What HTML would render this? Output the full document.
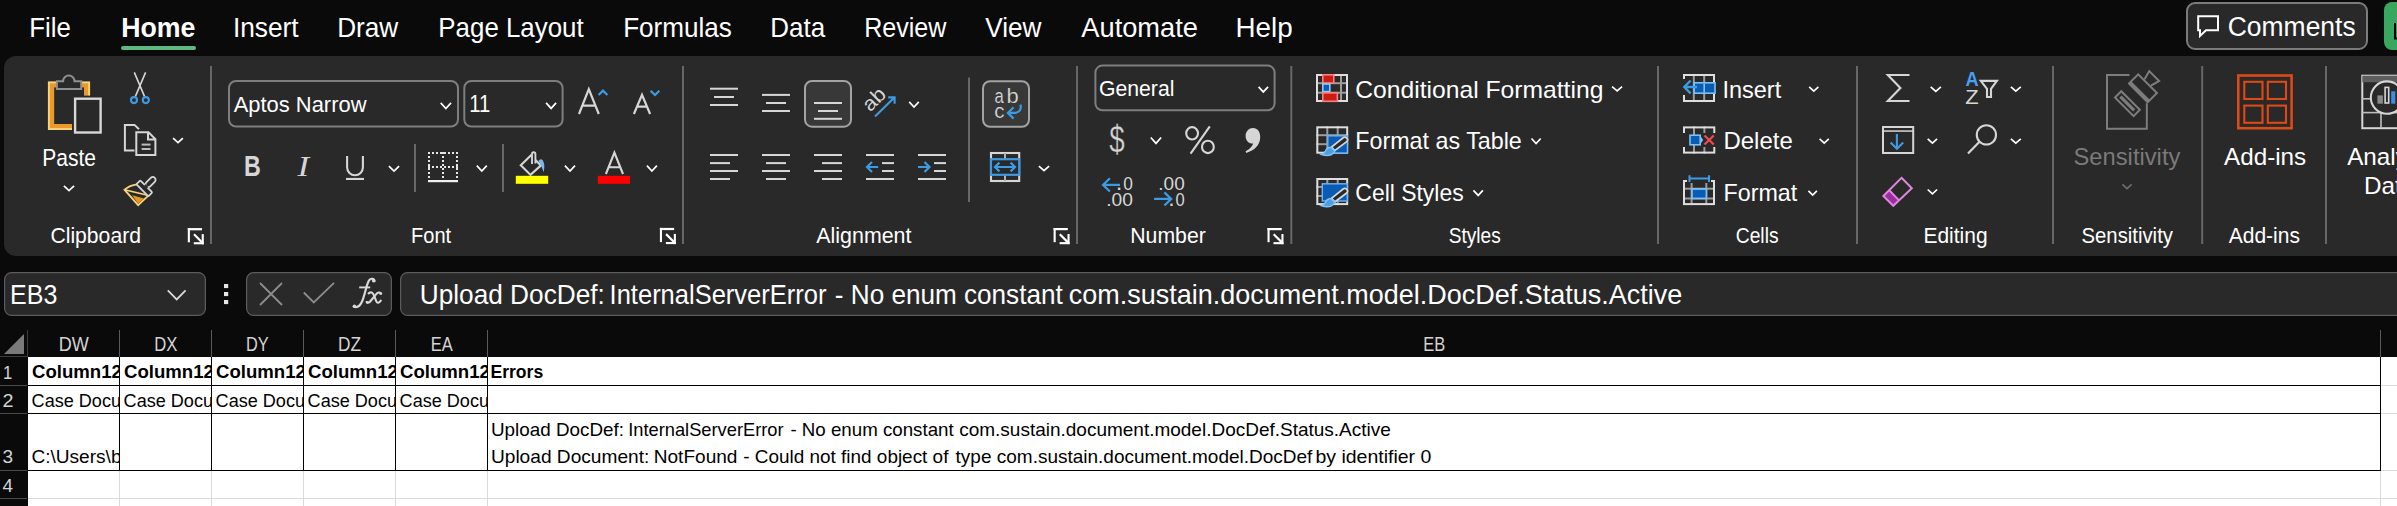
<!DOCTYPE html>
<html><head><meta charset="utf-8"><title>Excel</title>
<style>
html,body{margin:0;padding:0;background:#0a0a0a;width:2397px;height:506px;overflow:hidden}
svg{position:absolute;left:0;top:0;display:block}
text{font-family:"Liberation Sans",sans-serif;white-space:pre}
</style></head><body>
<svg width="2397" height="506" viewBox="0 0 2397 506">
<defs><clipPath id="c28"><rect x="28" y="357" width="91" height="150"/></clipPath><clipPath id="c120"><rect x="120" y="357" width="91" height="150"/></clipPath><clipPath id="c212"><rect x="212" y="357" width="91" height="150"/></clipPath><clipPath id="c304"><rect x="304" y="357" width="91" height="150"/></clipPath><clipPath id="c396"><rect x="396" y="357" width="91" height="150"/></clipPath></defs>
<rect x="4" y="56" width="2460" height="200" rx="12" fill="#292929"/>
<rect x="121" y="46" width="75" height="4" rx="2" fill="#5fb883"/>
<rect x="2187.0" y="3.0" width="180.0" height="46.0" rx="8" fill="#292929" stroke="#7b7b7b" stroke-width="2"/>
<rect x="2384" y="2" width="60" height="48" rx="8" fill="#3aa75f"/>
<rect x="2394" y="23" width="2" height="16" fill="#000"/><rect x="2394" y="37.5" width="3" height="2" fill="#000"/>
<rect x="210.0" y="66" width="2" height="178" fill="#676767"/>
<rect x="682.0" y="66" width="2" height="178" fill="#676767"/>
<rect x="1076.0" y="66" width="2" height="178" fill="#676767"/>
<rect x="1290.3" y="66" width="2" height="178" fill="#676767"/>
<rect x="1657.0" y="66" width="2" height="178" fill="#676767"/>
<rect x="1856.0" y="66" width="2" height="178" fill="#676767"/>
<rect x="2052.0" y="66" width="2" height="178" fill="#676767"/>
<rect x="2201.2" y="66" width="2" height="178" fill="#676767"/>
<rect x="2325.0" y="66" width="2" height="178" fill="#676767"/>
<rect x="414.0" y="144" width="2" height="48" fill="#676767"/>
<rect x="502.0" y="144" width="2" height="48" fill="#676767"/>
<rect x="968.0" y="77.5" width="2" height="124.5" fill="#676767"/>
<rect x="229.0" y="81.0" width="229.0" height="45.6" rx="7" fill="#292929" stroke="#7e7e7e" stroke-width="2"/>
<rect x="464.3" y="81.0" width="98.3" height="45.6" rx="7" fill="#292929" stroke="#7e7e7e" stroke-width="2"/>
<rect x="1095.4" y="65.6" width="179.2" height="44.7" rx="7" fill="#292929" stroke="#7e7e7e" stroke-width="2"/>
<rect x="805.0" y="81.0" width="46.0" height="45.7" rx="7" fill="#383838" stroke="#a3a3a3" stroke-width="2"/>
<rect x="983.0" y="81.2" width="46.0" height="45.6" rx="7" fill="#383838" stroke="#a3a3a3" stroke-width="2"/>
<g fill="#ffffff"><rect x="187.8" y="228.1" width="14.2" height="2.2"/><rect x="187.8" y="228.1" width="2.1" height="14.2"/><rect x="201.7" y="234.1" width="2.1" height="10.2"/><rect x="193.8" y="242.2" width="10" height="2.1"/></g><line x1="194.0" y1="234.3" x2="202.4" y2="242.7" stroke="#ffffff" stroke-width="2.2"/>
<g fill="#ffffff"><rect x="659.9" y="227.9" width="14.2" height="2.2"/><rect x="659.9" y="227.9" width="2.1" height="14.2"/><rect x="673.8" y="233.9" width="2.1" height="10.2"/><rect x="665.9" y="242.0" width="10" height="2.1"/></g><line x1="666.1" y1="234.1" x2="674.5" y2="242.5" stroke="#ffffff" stroke-width="2.2"/>
<g fill="#ffffff"><rect x="1053.6" y="228" width="14.2" height="2.2"/><rect x="1053.6" y="228" width="2.1" height="14.2"/><rect x="1067.5" y="234.0" width="2.1" height="10.2"/><rect x="1059.6" y="242.1" width="10" height="2.1"/></g><line x1="1059.8" y1="234.2" x2="1068.2" y2="242.6" stroke="#ffffff" stroke-width="2.2"/>
<g fill="#ffffff"><rect x="1267.5" y="228" width="14.2" height="2.2"/><rect x="1267.5" y="228" width="2.1" height="14.2"/><rect x="1281.4" y="234.0" width="2.1" height="10.2"/><rect x="1273.5" y="242.1" width="10" height="2.1"/></g><line x1="1273.7" y1="234.2" x2="1282.1" y2="242.6" stroke="#ffffff" stroke-width="2.2"/>
<polyline points="63.9,185.9 69.0,190.6 74.1,185.9" fill="none" stroke="#ffffff" stroke-width="1.7"/>
<polyline points="173.1,138.1 178.0,142.7 182.9,138.1" fill="none" stroke="#ffffff" stroke-width="1.7"/>
<polyline points="388.9,166.1 394.0,171.1 399.1,166.1" fill="none" stroke="#ffffff" stroke-width="1.7"/>
<polyline points="476.8,165.6 481.8,171.1 486.8,165.6" fill="none" stroke="#ffffff" stroke-width="1.7"/>
<polyline points="564.9,165.6 570.0,171.1 575.0,165.6" fill="none" stroke="#ffffff" stroke-width="1.7"/>
<polyline points="646.9,165.6 651.9,171.1 656.9,165.6" fill="none" stroke="#ffffff" stroke-width="1.7"/>
<polyline points="440.7,102.9 445.9,108.5 451.0,102.9" fill="none" stroke="#ffffff" stroke-width="1.7"/>
<polyline points="546.1,102.9 551.1,108.4 556.1,102.9" fill="none" stroke="#ffffff" stroke-width="1.7"/>
<polyline points="909.2,101.9 914.0,107.1 918.8,101.9" fill="none" stroke="#ffffff" stroke-width="1.7"/>
<polyline points="1038.9,166.1 1044.0,170.6 1049.1,166.1" fill="none" stroke="#ffffff" stroke-width="1.7"/>
<polyline points="1258.6,86.9 1263.3,91.9 1268.1,86.9" fill="none" stroke="#ffffff" stroke-width="1.7"/>
<polyline points="1150.8,137.5 1156.0,143.4 1161.1,137.5" fill="none" stroke="#ffffff" stroke-width="1.7"/>
<polyline points="1612.1,86.6 1617.1,90.8 1622.1,86.6" fill="none" stroke="#ffffff" stroke-width="1.7"/>
<polyline points="1531.5,138.5 1536.1,143.5 1540.7,138.5" fill="none" stroke="#ffffff" stroke-width="1.7"/>
<polyline points="1473.4,190.4 1478.2,195.4 1482.9,190.4" fill="none" stroke="#ffffff" stroke-width="1.7"/>
<polyline points="1809.2,86.9 1813.8,91.1 1818.4,86.9" fill="none" stroke="#ffffff" stroke-width="1.7"/>
<polyline points="1819.6,138.9 1824.2,143.1 1828.8,138.9" fill="none" stroke="#ffffff" stroke-width="1.7"/>
<polyline points="1808.4,190.9 1812.7,195.1 1816.9,190.9" fill="none" stroke="#ffffff" stroke-width="1.7"/>
<polyline points="1930.7,86.9 1935.8,91.3 1940.9,86.9" fill="none" stroke="#ffffff" stroke-width="1.7"/>
<polyline points="2010.9,86.9 2015.8,91.1 2020.8,86.9" fill="none" stroke="#ffffff" stroke-width="1.7"/>
<polyline points="1927.7,138.9 1932.4,143.1 1937.1,138.9" fill="none" stroke="#ffffff" stroke-width="1.7"/>
<polyline points="2010.9,138.9 2015.8,143.1 2020.8,138.9" fill="none" stroke="#ffffff" stroke-width="1.7"/>
<polyline points="1927.7,189.5 1932.4,193.9 1937.1,189.5" fill="none" stroke="#ffffff" stroke-width="1.7"/>
<polyline points="2122.4,184.4 2127.0,188.6 2131.6,184.4" fill="none" stroke="#6e6e6e" stroke-width="1.7"/>
<rect x="4.6" y="272.6" width="200.8" height="42.8" rx="7" fill="#292929" stroke="#5c5c5c" stroke-width="1.2"/>
<rect x="246.6" y="272.6" width="144.8" height="42.8" rx="7" fill="#292929" stroke="#5c5c5c" stroke-width="1.2"/>
<rect x="400.6" y="272.6" width="2058.8" height="42.8" rx="7" fill="#292929" stroke="#5c5c5c" stroke-width="1.2"/>
<rect x="224" y="284" width="4.2" height="4.1" fill="#e6e6e6"/>
<rect x="224" y="292" width="4.2" height="4.1" fill="#e6e6e6"/>
<rect x="224" y="300" width="4.2" height="4.1" fill="#e6e6e6"/>
<polyline points="167.8,290.4 176.7,299.5 185.6,290.4" fill="none" stroke="#d8d8d8" stroke-width="1.8"/>
<path d="M260,283 L282,305 M282,283 L260,305" stroke="#8c8c8c" stroke-width="1.8" fill="none"/>
<polyline points="303.8,292.5 313.8,302.5 334,282.8" fill="none" stroke="#8c8c8c" stroke-width="1.8"/>
<path d="M374.6,281.2 C374.2,278.4 370.8,277.8 368.9,280.6 C366.6,284 364.6,296 361.9,301.8 C360,306 357,308 353.8,306.6" fill="none" stroke="#d8d8d8" stroke-width="2.2" stroke-linecap="round"/>
<path d="M359.2,287.4 H370.2" fill="none" stroke="#d8d8d8" stroke-width="1.9" />
<path d="M368.6,293.4 C371.4,291.2 373,292.6 374.2,296 L376.2,301.2 C377.2,303.6 379,303.2 380.8,300.6" fill="none" stroke="#d8d8d8" stroke-width="2.1" stroke-linecap="round"/>
<path d="M381.2,293.6 C379.8,291.6 377.6,292.4 375.8,294.6 L370.6,301 C369.4,302.6 367.8,303.4 366.6,302" fill="none" stroke="#d8d8d8" stroke-width="2.1" stroke-linecap="round"/>
<circle cx="373.6" cy="280.8" r="1.7" fill="#d8d8d8"/><circle cx="354.4" cy="306.2" r="1.7" fill="#d8d8d8"/><circle cx="367.4" cy="302.4" r="1.3" fill="#d8d8d8"/><circle cx="380.4" cy="293.4" r="1.3" fill="#d8d8d8"/>
<polygon points="24,334 24,354 4,354" fill="#7a7a7a"/>
<rect x="27" y="330" width="1" height="27" fill="#3c3c3c"/>
<rect x="0" y="356" width="27" height="1" fill="#3c3c3c"/>
<rect x="119" y="330" width="1" height="27" fill="#5a5a5a"/>
<rect x="211" y="330" width="1" height="27" fill="#5a5a5a"/>
<rect x="303" y="330" width="1" height="27" fill="#5a5a5a"/>
<rect x="395" y="330" width="1" height="27" fill="#5a5a5a"/>
<rect x="487" y="330" width="1" height="27" fill="#5a5a5a"/>
<rect x="2380" y="330" width="1" height="27" fill="#5a5a5a"/>
<rect x="28" y="357" width="2369" height="149" fill="#ffffff"/>
<rect x="0" y="385" width="27" height="1" fill="#4a4a4a"/>
<rect x="0" y="413" width="27" height="1" fill="#4a4a4a"/>
<rect x="0" y="470" width="27" height="1" fill="#4a4a4a"/>
<rect x="0" y="498" width="27" height="1" fill="#4a4a4a"/>
<rect x="28" y="498" width="2369" height="1" fill="#dadada"/>
<rect x="119" y="470" width="1" height="36" fill="#dadada"/>
<rect x="211" y="470" width="1" height="36" fill="#dadada"/>
<rect x="303" y="470" width="1" height="36" fill="#dadada"/>
<rect x="395" y="470" width="1" height="36" fill="#dadada"/>
<rect x="487" y="470" width="1" height="36" fill="#dadada"/>
<rect x="2380" y="470" width="1" height="36" fill="#dadada"/>
<rect x="2381" y="385" width="16" height="1" fill="#dadada"/>
<rect x="2381" y="413" width="16" height="1" fill="#dadada"/>
<rect x="2381" y="470" width="16" height="1" fill="#dadada"/>
<rect x="119" y="357" width="1" height="114" fill="#000"/>
<rect x="211" y="357" width="1" height="114" fill="#000"/>
<rect x="303" y="357" width="1" height="114" fill="#000"/>
<rect x="395" y="357" width="1" height="114" fill="#000"/>
<rect x="487" y="357" width="1" height="114" fill="#000"/>
<rect x="2380" y="357" width="1" height="114" fill="#000"/>
<rect x="28" y="385" width="2353" height="1" fill="#000"/>
<rect x="28" y="413" width="2353" height="1" fill="#000"/>
<rect x="28" y="470" width="2353" height="1" fill="#000"/>
<rect x="47.90" y="81.40" width="42.20" height="48.60" fill="#f8d47e"/>
<rect x="49.80" y="83.30" width="38.40" height="44.80" fill="#e99a2a"/>
<rect x="54.20" y="87.40" width="29.80" height="36.60" fill="#292929"/>
<rect x="72.00" y="95.60" width="32.00" height="40.40" fill="#292929"/>
<path d="M56.9,88.9 V81.2 H63.1 A5.7,5.7 0 0 1 74.5,81.2 H81.2 V88.9 Z" fill="#292929" stroke="#8f8f8f" stroke-width="2" />
<rect x="75.1" y="98.7" width="25.5" height="33.8" fill="none" stroke="#d8d8d8" stroke-width="2.4"/>
<path d="M134.3,72.4 L144.6,96.6 M145.6,72.4 L135.3,96.6" fill="none" stroke="#d6d6d6" stroke-width="1.6" />
<circle cx="134" cy="100.1" r="3.0" fill="none" stroke="#3d9be3" stroke-width="2.1"/>
<circle cx="145.8" cy="100.1" r="3.0" fill="none" stroke="#3d9be3" stroke-width="2.1"/>
<path d="M134.5,150.6 H124.9 V124.9 H134.5 L139,129.3" fill="none" stroke="#d6d6d6" stroke-width="2" />
<path d="M136.3,155 V132.2 H148.5 L155.4,139.1 V155 Z M148,132.2 V139.6 H155.4" fill="#292929" stroke="#d6d6d6" stroke-width="2" />
<rect x="141.60" y="143.60" width="8.90" height="2.00" fill="#bdbdbd"/>
<rect x="141.60" y="148.00" width="8.90" height="2.00" fill="#bdbdbd"/>
<g transform="translate(144.3,188.3) rotate(45)"><path d="M-8,2.3 Q-12.5,8 -13,15 L7.6,16.3 L8,2.3" fill="none" stroke="#f6d27c" stroke-width="1.8" /><path d="M-13,15 L8.2,2" fill="none" stroke="#f6d27c" stroke-width="1.6" /><polygon points="-3.6,13.6 6.9,7.4 6.5,15.2" fill="#e8961f"/><rect x="-8.5" y="-2.8" width="17" height="5.6" rx="1" fill="#292929" stroke="#d6d6d6" stroke-width="1.8"/><rect x="-2.8" y="-14.8" width="5.6" height="12" rx="2.8" fill="#292929" stroke="#d6d6d6" stroke-width="1.8"/><rect x="-1.90" y="-3.70" width="3.80" height="2.10" fill="#292929"/></g>
<path d="M579,114 L588.8,89.2 L598.8,114 M582.6,105.6 H595.2" fill="none" stroke="#d6d6d6" stroke-width="2.2" stroke-linejoin="miter"/>
<path d="M598.6,95 L603,90.6 L607.4,95" fill="none" stroke="#3d9be3" stroke-width="2.2" />
<path d="M633.9,114 L642,94.8 L650.1,114 M636.8,106.6 H647.2" fill="none" stroke="#d6d6d6" stroke-width="2.2" />
<path d="M650.6,90.8 L655,95 L659.4,90.8" fill="none" stroke="#3d9be3" stroke-width="2.2" />
<path d="M347.1,156 V167.3 A7.9,7.9 0 0 0 362.9,167.3 V156" fill="none" stroke="#d6d6d6" stroke-width="2.1" />
<rect x="346.00" y="177.90" width="18.00" height="2.10" fill="#d6d6d6"/>
<path d="M428.0,152.0h2v2h-2zM428.0,166.0h2v2h-2zM432.0,152.0h2v2h-2zM432.0,166.0h2v2h-2zM436.0,152.0h2v2h-2zM436.0,166.0h2v2h-2zM440.0,152.0h2v2h-2zM440.0,166.0h2v2h-2zM444.0,152.0h2v2h-2zM444.0,166.0h2v2h-2zM448.0,152.0h2v2h-2zM448.0,166.0h2v2h-2zM452.0,152.0h2v2h-2zM452.0,166.0h2v2h-2zM456.0,152.0h2v2h-2zM456.0,166.0h2v2h-2zM428.0,152.0h2v2h-2zM442.0,152.0h2v2h-2zM456.0,152.0h2v2h-2zM428.0,156.0h2v2h-2zM442.0,156.0h2v2h-2zM456.0,156.0h2v2h-2zM428.0,160.0h2v2h-2zM442.0,160.0h2v2h-2zM456.0,160.0h2v2h-2zM428.0,164.0h2v2h-2zM442.0,164.0h2v2h-2zM456.0,164.0h2v2h-2zM428.0,168.0h2v2h-2zM442.0,168.0h2v2h-2zM456.0,168.0h2v2h-2zM428.0,172.0h2v2h-2zM442.0,172.0h2v2h-2zM456.0,172.0h2v2h-2zM428.0,176.0h2v2h-2zM442.0,176.0h2v2h-2zM456.0,176.0h2v2h-2z" fill="#e6e6e6"/>
<rect x="428.00" y="180.00" width="30.00" height="2.20" fill="#f0f0f0"/>
<path d="M530.8,155.4 L541,165.4 L530.5,174.9 L520.8,165.3 Z" fill="none" stroke="#d6d6d6" stroke-width="2.1" />
<rect x="531.2" y="152.2" width="4" height="12" rx="2" fill="#292929"/>
<path d="M532,164 V154 A1.7,1.7 0 0 1 535.4,154 V163.5" fill="none" stroke="#d6d6d6" stroke-width="1.9" />
<path d="M538.4,160.8 Q540.5,158 542.5,160 Q545.2,163 543.8,172.3 Q541.5,166 538.4,160.8 Z" fill="#7cb9ea" stroke="none" stroke-width="0" />
<rect x="515.80" y="175.80" width="32.40" height="8.00" fill="#ffff00"/>
<path d="M605.9,174 L614.4,152.6 L623,174 M608.7,167.2 H620.1" fill="none" stroke="#d6d6d6" stroke-width="2.1" />
<rect x="597.80" y="175.80" width="32.20" height="8.00" fill="#ff0000"/>
<rect x="710" y="87.7" width="28" height="2" fill="#d6d6d6"/><rect x="710" y="104.0" width="28" height="2" fill="#d6d6d6"/><rect x="714" y="96.0" width="20" height="2" fill="#d6d6d6"/>
<rect x="762" y="93.9" width="28" height="2" fill="#d6d6d6"/><rect x="762" y="110.0" width="28" height="2" fill="#d6d6d6"/><rect x="766" y="102.0" width="20" height="2" fill="#d6d6d6"/>
<rect x="814" y="102.0" width="28" height="2" fill="#d6d6d6"/><rect x="814" y="117.8" width="28" height="2" fill="#d6d6d6"/><rect x="818" y="110.0" width="20" height="2" fill="#d6d6d6"/>
<rect x="710" y="154.0" width="28" height="2" fill="#d6d6d6"/><rect x="710" y="170.0" width="28" height="2" fill="#d6d6d6"/><rect x="710" y="162.1" width="20" height="2" fill="#d6d6d6"/><rect x="710" y="178.0" width="20" height="2" fill="#d6d6d6"/>
<rect x="762" y="154.0" width="28" height="2" fill="#d6d6d6"/><rect x="762" y="170.0" width="28" height="2" fill="#d6d6d6"/><rect x="766" y="162.1" width="20" height="2" fill="#d6d6d6"/><rect x="766" y="178.0" width="20" height="2" fill="#d6d6d6"/>
<rect x="814" y="154.0" width="28" height="2" fill="#d6d6d6"/><rect x="814" y="170.0" width="28" height="2" fill="#d6d6d6"/><rect x="822" y="162.1" width="20" height="2" fill="#d6d6d6"/><rect x="822" y="178.0" width="20" height="2" fill="#d6d6d6"/>
<rect x="866" y="154.0" width="28" height="2" fill="#d6d6d6"/><rect x="866" y="178.0" width="28" height="2" fill="#d6d6d6"/><rect x="882" y="162.1" width="12" height="2" fill="#d6d6d6"/><rect x="882" y="170.0" width="12" height="2" fill="#d6d6d6"/>
<rect x="918" y="154.0" width="28" height="2" fill="#d6d6d6"/><rect x="918" y="178.0" width="28" height="2" fill="#d6d6d6"/><rect x="934" y="162.1" width="12" height="2" fill="#d6d6d6"/><rect x="934" y="170.0" width="12" height="2" fill="#d6d6d6"/>
<path d="M867,167 H878.2 M872,162 L867,167 L872,172" fill="none" stroke="#3d9be3" stroke-width="2.2" />
<path d="M918,167 H929.5 M924.5,162 L929.5,167 L924.5,172" fill="none" stroke="#3d9be3" stroke-width="2.2" />
<path d="M875,116.6 L894.3,97.4 M888.2,97.4 H894.6 V103.8" fill="none" stroke="#3d9be3" stroke-width="2.1" />
<path d="M1020.4,104.6 C1021.8,109.5 1019.5,112.9 1013,112.9 H1007.8 M1013.6,107.2 L1007.9,112.9 L1013.6,118.6" fill="none" stroke="#3d9be3" stroke-width="2.2" />
<rect x="991" y="153" width="28.2" height="28" fill="none" stroke="#d6d6d6" stroke-width="2.1"/>
<rect x="1004.00" y="153.00" width="2.00" height="28.00" fill="#b0b0b0"/>
<rect x="991" y="159.2" width="28.2" height="15.6" fill="#292929" stroke="#3d9be3" stroke-width="2.2"/>
<path d="M994.8,167 H1015.2 M999.4,162.6 L995,167 L999.4,171.4 M1010.6,162.6 L1015,167 L1010.6,171.4" fill="none" stroke="#3d9be3" stroke-width="2.2" />
<ellipse cx="1192.1" cy="133.3" rx="5.9" ry="6.2" fill="none" stroke="#d6d6d6" stroke-width="2.1"/>
<ellipse cx="1207.9" cy="146.9" rx="5.9" ry="6.2" fill="none" stroke="#d6d6d6" stroke-width="2.1"/>
<path d="M1209.8,126.4 L1190.6,153.6" fill="none" stroke="#d6d6d6" stroke-width="2.1" />
<path d="M1253,128 C1257.5,128 1260.2,131.5 1260.2,137 C1260.2,145 1254.5,150.5 1246.2,152.9 L1245.6,151.3 C1250,149 1252.3,146.3 1253.2,143.6 C1248.6,143.8 1245.6,140.6 1245.6,136 C1245.6,131.5 1249,128 1253,128 Z" fill="#d6d6d6" stroke="none" stroke-width="0" />
<path d="M1102.8,184.9 H1120 M1109.9,178.3 L1103,184.9 L1109.9,191.5" fill="none" stroke="#3d9be3" stroke-width="2.2" />
<path d="M1154.1,198.9 H1171.2 M1164.4,192.4 L1171.2,198.9 L1164.4,205.5" fill="none" stroke="#3d9be3" stroke-width="2.2" />
<rect x="1327.00" y="74.00" width="2.00" height="28.00" fill="#9c9c9c"/><rect x="1340.00" y="74.00" width="2.00" height="28.00" fill="#9c9c9c"/><rect x="1316.00" y="82.20" width="32.00" height="2.00" fill="#9c9c9c"/><rect x="1316.00" y="91.70" width="32.00" height="2.00" fill="#9c9c9c"/><rect x="1317" y="75" width="30" height="26" fill="none" stroke="#dedede" stroke-width="2"/>
<rect x="1322.8" y="74.8" width="11" height="8.2" fill="#c81e12" stroke="#ff7f86" stroke-width="1.6"/>
<rect x="1322.8" y="84" width="7" height="7.6" fill="#0a5bb3" stroke="#8ccbfa" stroke-width="1.6"/>
<rect x="1322.8" y="92.9" width="14.6" height="8.4" fill="#c81e12" stroke="#ff7f86" stroke-width="1.6"/>
<rect x="1326.30" y="126.30" width="2.00" height="27.40" fill="#9c9c9c"/><rect x="1336.70" y="126.30" width="2.00" height="27.40" fill="#9c9c9c"/><rect x="1316.30" y="134.20" width="31.90" height="2.00" fill="#9c9c9c"/><rect x="1316.30" y="143.20" width="31.90" height="2.00" fill="#9c9c9c"/><rect x="1317.3" y="127.3" width="29.90000000000009" height="25.39999999999999" fill="none" stroke="#dedede" stroke-width="2"/>
<rect x="1327.8" y="135.8" width="19.6" height="17.2" fill="#0a5bb3" stroke="#6fb6f2" stroke-width="1.4"/>
<g transform="translate(0,0)"><path d="M1346.5,137.8 Q1348.5,139.5 1347,141.5 L1335,150.5 L1331.5,147 L1343.5,137.5 Q1345,136.5 1346.5,137.8 Z" fill="#292929" stroke="#d6d6d6" stroke-width="1.7" /><path d="M1331,147.5 Q1327,147 1325.5,151 Q1324.5,153.5 1321.5,154.5 Q1327.5,156.5 1331.5,154.5 Q1334.5,152.8 1334.8,150.8 Z" fill="#4a9fe6" stroke="#82c1f3" stroke-width="1.5" /></g>
<rect x="1326.30" y="178.00" width="2.00" height="27.10" fill="#9c9c9c"/><rect x="1336.70" y="178.00" width="2.00" height="27.10" fill="#9c9c9c"/><rect x="1316.30" y="186.00" width="31.90" height="2.00" fill="#9c9c9c"/><rect x="1316.30" y="195.00" width="31.90" height="2.00" fill="#9c9c9c"/><rect x="1317.3" y="179" width="29.90000000000009" height="25.099999999999994" fill="none" stroke="#dedede" stroke-width="2"/>
<rect x="1322.3" y="183.8" width="25" height="17.2" fill="#0a5bb3" stroke="#6fb6f2" stroke-width="1.4"/>
<g transform="translate(0,51.3)"><path d="M1346.5,137.8 Q1348.5,139.5 1347,141.5 L1335,150.5 L1331.5,147 L1343.5,137.5 Q1345,136.5 1346.5,137.8 Z" fill="#292929" stroke="#d6d6d6" stroke-width="1.7" /><path d="M1331,147.5 Q1327,147 1325.5,151 Q1324.5,153.5 1321.5,154.5 Q1327.5,156.5 1331.5,154.5 Q1334.5,152.8 1334.8,150.8 Z" fill="#4a9fe6" stroke="#82c1f3" stroke-width="1.5" /></g>
<rect x="1692.80" y="74.00" width="2.00" height="28.00" fill="#9c9c9c"/><rect x="1703.20" y="74.00" width="2.00" height="28.00" fill="#9c9c9c"/><rect x="1684" y="75" width="30" height="26" fill="none" stroke="#dedede" stroke-width="2"/>
<rect x="1682.00" y="79.00" width="3.00" height="16.00" fill="#292929"/>
<rect x="1694.2" y="82.8" width="20.8" height="10.4" fill="#0a5bb3" stroke="#7cc0f6" stroke-width="1.6"/>
<rect x="1703.40" y="83.60" width="1.60" height="9.20" fill="#7cc0f6"/>
<path d="M1684,87 H1697.2 M1690.6,80.6 L1684.2,87 L1690.6,93.4" fill="none" stroke="#3d9be3" stroke-width="2.3" />
<rect x="1693.00" y="126.40" width="2.00" height="27.20" fill="#9c9c9c"/><rect x="1703.40" y="126.40" width="2.00" height="27.20" fill="#9c9c9c"/><rect x="1684" y="127.4" width="30.299999999999955" height="25.19999999999999" fill="none" stroke="#dedede" stroke-width="2"/>
<rect x="1682.00" y="133.00" width="3.50" height="14.00" fill="#292929"/>
<rect x="1702.00" y="133.00" width="14.00" height="14.00" fill="#292929"/>
<rect x="1690" y="135.2" width="10.2" height="9.6" fill="#0a5bb3" stroke="#7cc0f6" stroke-width="1.6"/>
<polygon points="1700.8,136.5 1703.2,140 1700.8,143.5" fill="#7cc0f6"/>
<path d="M1704.5,135.5 L1713.8,144.5 M1713.8,135.5 L1704.5,144.5" fill="none" stroke="#ee4b4f" stroke-width="2.3" />
<rect x="1690.60" y="180.00" width="2.00" height="25.10" fill="#9c9c9c"/><rect x="1705.30" y="180.00" width="2.00" height="25.10" fill="#9c9c9c"/><rect x="1683.00" y="187.70" width="32.00" height="2.00" fill="#9c9c9c"/><rect x="1683.00" y="197.50" width="32.00" height="2.00" fill="#9c9c9c"/><rect x="1684" y="181" width="30" height="23.099999999999994" fill="none" stroke="#dedede" stroke-width="2"/>
<rect x="1687.00" y="178.00" width="24.00" height="5.00" fill="#292929"/>
<rect x="1692" y="189" width="14.4" height="9.4" fill="#0a5bb3" stroke="#7cc0f6" stroke-width="1.7"/>
<path d="M1689.5,178.6 H1709 M1689.5,175.2 V182 M1709,175.2 V182" fill="none" stroke="#3d9be3" stroke-width="2" />
<path d="M1909.5,75 H1887.8 L1900.4,88 L1887.8,101 H1909.5" fill="none" stroke="#d6d6d6" stroke-width="2.1" stroke-linejoin="miter"/>
<path d="M1980.8,80.9 H1996.9 L1991,88.8 V97 H1987 V88.8 Z" fill="none" stroke="#d6d6d6" stroke-width="2.1" />
<rect x="1883" y="127" width="30.2" height="26" fill="none" stroke="#d6d6d6" stroke-width="2"/>
<rect x="1883.00" y="130.30" width="30.20" height="1.50" fill="#d6d6d6"/>
<path d="M1896.9,134 V148.8 M1890.6,142.4 L1896.9,148.8 L1903.2,142.4" fill="none" stroke="#3d9be3" stroke-width="2.1" />
<circle cx="1986.4" cy="134.9" r="9.6" fill="none" stroke="#d6d6d6" stroke-width="2.1"/>
<path d="M1979.5,141.8 L1968,153.4" fill="none" stroke="#d6d6d6" stroke-width="2.2" />
<polygon points="1882.4,196 1888.5,189.8 1899.4,200.7 1893.3,206.9" fill="#9c2ca3"/>
<path d="M1901.5,177.8 L1911.8,188.2 L1893.3,205.8 L1883.4,196 Z M1889,190 L1899,200.4" fill="none" stroke="#dc86dc" stroke-width="2" />
<path d="M2129.5,75 H2107 V128.7 H2146.8 V103.3" fill="none" stroke="#7d7d7d" stroke-width="2" />
<g transform="translate(2137,96) rotate(45)"><rect x="-14.5" y="7.8" width="26.3" height="8.8" fill="none" stroke="#7d7d7d" stroke-width="2"/><rect x="-11.2" y="10.6" width="19.4" height="3.2" fill="#7d7d7d"/><rect x="-14.5" y="-16.2" width="26.5" height="12.8" fill="none" stroke="#7d7d7d" stroke-width="2"/><rect x="-14.5" y="-6.4" width="26.5" height="4.2" fill="#7d7d7d"/><path d="M-6.5,-17.2 L-9,-26.3 L5,-26.3 L2.5,-17.2" fill="none" stroke="#7d7d7d" stroke-width="2" /></g>
<rect x="2238.3" y="75.5" width="53.3" height="52.7" fill="none" stroke="#dc4a17" stroke-width="2.6"/>
<rect x="2244.3" y="81.8" width="18.2" height="17.2" fill="none" stroke="#dc4a17" stroke-width="2.1"/>
<rect x="2267.8" y="81.8" width="18.2" height="17.2" fill="none" stroke="#dc4a17" stroke-width="2.1"/>
<rect x="2244.3" y="105.6" width="18.2" height="17.2" fill="none" stroke="#dc4a17" stroke-width="2.1"/>
<rect x="2267.8" y="105.6" width="18.2" height="17.2" fill="none" stroke="#dc4a17" stroke-width="2.1"/>
<rect x="2362.3" y="75.7" width="60" height="52.5" fill="none" stroke="#d6d6d6" stroke-width="2"/>
<rect x="2362.30" y="75.70" width="57.70" height="6.50" fill="#5e5e5e"/>
<rect x="2362.30" y="98.00" width="37.70" height="1.60" fill="#bdbdbd"/>
<rect x="2362.30" y="111.80" width="37.70" height="1.60" fill="#bdbdbd"/>
<rect x="2380.20" y="112.00" width="1.60" height="16.00" fill="#bdbdbd"/>
<circle cx="2387" cy="97.6" r="16.2" fill="#292929" stroke="#d6d6d6" stroke-width="2.1"/>
<rect x="2377.40" y="95.40" width="5.50" height="8.30" fill="#8a8a8a"/>
<rect x="2385.1" y="87.4" width="3.6" height="15.6" fill="none" stroke="#d6d6d6" stroke-width="1.6"/>
<rect x="2391.20" y="91.30" width="4.10" height="12.40" fill="#3a8ee6"/>
<path d="M2198.2,16.3 H2218 V30.3 H2206 L2200,36 V30.3 H2198.2 Z" fill="none" stroke="#ffffff" stroke-width="2" stroke-linejoin="miter"/>
<g id="texts" fill="#ffffff">
<text x="29.36" y="37.10" font-size="28.05" textLength="41.59" lengthAdjust="spacingAndGlyphs">File</text>
<text x="121.15" y="37.10" font-size="28.05" textLength="74.32" lengthAdjust="spacingAndGlyphs" font-weight="bold">Home</text>
<text x="232.93" y="37.10" font-size="28.05" textLength="65.68" lengthAdjust="spacingAndGlyphs">Insert</text>
<text x="337.13" y="37.10" font-size="28.05" textLength="61.17" lengthAdjust="spacingAndGlyphs">Draw</text>
<text x="438.36" y="37.10" font-size="28.05" textLength="145.25" lengthAdjust="spacingAndGlyphs">Page Layout</text>
<text x="623.14" y="37.10" font-size="28.05" textLength="108.78" lengthAdjust="spacingAndGlyphs">Formulas</text>
<text x="770.35" y="37.10" font-size="28.05" textLength="54.88" lengthAdjust="spacingAndGlyphs">Data</text>
<text x="864.21" y="37.10" font-size="28.05" textLength="82.22" lengthAdjust="spacingAndGlyphs">Review</text>
<text x="985.20" y="37.10" font-size="28.05" textLength="56.30" lengthAdjust="spacingAndGlyphs">View</text>
<text x="1081.30" y="37.10" font-size="28.05" textLength="116.68" lengthAdjust="spacingAndGlyphs">Automate</text>
<text x="1235.52" y="37.10" font-size="28.05" textLength="57.18" lengthAdjust="spacingAndGlyphs">Help</text>
<text x="2227.76" y="36.20" font-size="28.20" textLength="127.93" lengthAdjust="spacingAndGlyphs">Comments</text>
<text x="42.23" y="165.80" font-size="24.13" textLength="53.73" lengthAdjust="spacingAndGlyphs">Paste</text>
<text x="50.45" y="243.20" font-size="22.38" textLength="90.51" lengthAdjust="spacingAndGlyphs">Clipboard</text>
<text x="411.00" y="243.20" font-size="22.38" textLength="40.19" lengthAdjust="spacingAndGlyphs">Font</text>
<text x="816.30" y="243.20" font-size="22.38" textLength="95.15" lengthAdjust="spacingAndGlyphs">Alignment</text>
<text x="1130.25" y="243.20" font-size="22.38" textLength="75.53" lengthAdjust="spacingAndGlyphs">Number</text>
<text x="1448.64" y="243.20" font-size="22.38" textLength="52.12" lengthAdjust="spacingAndGlyphs">Styles</text>
<text x="1735.74" y="243.20" font-size="22.38" textLength="42.82" lengthAdjust="spacingAndGlyphs">Cells</text>
<text x="1923.46" y="243.20" font-size="22.38" textLength="64.09" lengthAdjust="spacingAndGlyphs">Editing</text>
<text x="2081.49" y="243.20" font-size="22.38" textLength="91.47" lengthAdjust="spacingAndGlyphs">Sensitivity</text>
<text x="2228.70" y="243.20" font-size="22.38" textLength="71.28" lengthAdjust="spacingAndGlyphs">Add-ins</text>
<text x="233.70" y="111.80" font-size="22.97" textLength="132.80" lengthAdjust="spacingAndGlyphs">Aptos Narrow</text>
<text x="469.13" y="112.20" font-size="23.40" textLength="21.04" lengthAdjust="spacingAndGlyphs">11</text>
<text x="1098.98" y="95.80" font-size="22.97" textLength="75.44" lengthAdjust="spacingAndGlyphs">General</text>
<text x="1355.25" y="97.60" font-size="23.40" textLength="248.12" lengthAdjust="spacingAndGlyphs">Conditional Formatting</text>
<text x="1355.31" y="148.90" font-size="23.40" textLength="166.49" lengthAdjust="spacingAndGlyphs">Format as Table</text>
<text x="1355.32" y="201.30" font-size="23.40" textLength="108.36" lengthAdjust="spacingAndGlyphs">Cell Styles</text>
<text x="1722.49" y="97.60" font-size="23.40" textLength="58.70" lengthAdjust="spacingAndGlyphs">Insert</text>
<text x="1723.48" y="148.90" font-size="23.40" textLength="69.26" lengthAdjust="spacingAndGlyphs">Delete</text>
<text x="1723.51" y="201.30" font-size="23.40" textLength="73.70" lengthAdjust="spacingAndGlyphs">Format</text>
<text x="2073.52" y="164.70" font-size="24.27" textLength="106.83" lengthAdjust="spacingAndGlyphs" fill="#7a7a7a">Sensitivity</text>
<text x="2224.00" y="164.70" font-size="24.27" textLength="82.23" lengthAdjust="spacingAndGlyphs">Add-ins</text>
<text x="2347.20" y="164.70" font-size="24.27" textLength="86.28" lengthAdjust="spacingAndGlyphs">Analyze</text>
<text x="2364.00" y="194.40" font-size="24.27" textLength="51.23" lengthAdjust="spacingAndGlyphs">Data</text>
<text x="10.05" y="303.80" font-size="27.03" textLength="47.30" lengthAdjust="spacingAndGlyphs">EB3</text>
<text x="419.76" y="303.80" font-size="27.03" textLength="185.10" lengthAdjust="spacingAndGlyphs">Upload DocDef:</text>
<text x="609.61" y="303.80" font-size="27.03" textLength="216.78" lengthAdjust="spacingAndGlyphs">InternalServerError</text>
<text x="834.83" y="303.80" font-size="27.03" textLength="227.89" lengthAdjust="spacingAndGlyphs">- No enum constant</text>
<text x="1068.80" y="303.80" font-size="27.03" textLength="613.42" lengthAdjust="spacingAndGlyphs">com.sustain.document.model.DocDef.Status.Active</text>
<text x="58.80" y="351.10" font-size="20.20" textLength="30.14" lengthAdjust="spacingAndGlyphs" fill="#d4d4d4">DW</text>
<text x="154.17" y="351.10" font-size="20.20" textLength="23.18" lengthAdjust="spacingAndGlyphs" fill="#d4d4d4">DX</text>
<text x="246.09" y="351.10" font-size="20.20" textLength="22.68" lengthAdjust="spacingAndGlyphs" fill="#d4d4d4">DY</text>
<text x="338.04" y="351.10" font-size="20.20" textLength="23.04" lengthAdjust="spacingAndGlyphs" fill="#d4d4d4">DZ</text>
<text x="430.68" y="351.10" font-size="20.20" textLength="21.98" lengthAdjust="spacingAndGlyphs" fill="#d4d4d4">EA</text>
<text x="1423.18" y="351.10" font-size="20.20" textLength="22.00" lengthAdjust="spacingAndGlyphs" fill="#d4d4d4">EB</text>
<text x="3.10" y="378.60" font-size="18.46" textLength="9.23" lengthAdjust="spacingAndGlyphs" fill="#d4d4d4">1</text>
<text x="2.50" y="406.80" font-size="19.04" textLength="11.01" lengthAdjust="spacingAndGlyphs" fill="#d4d4d4">2</text>
<text x="2.50" y="463.40" font-size="18.17" textLength="10.60" lengthAdjust="spacingAndGlyphs" fill="#d4d4d4">3</text>
<text x="2.50" y="491.60" font-size="18.02" textLength="10.52" lengthAdjust="spacingAndGlyphs" fill="#d4d4d4">4</text>
<text x="490.48" y="378.40" font-size="19.19" textLength="52.72" lengthAdjust="spacingAndGlyphs" font-weight="bold" fill="#000">Errors</text>
<text x="32.00" y="378.40" font-size="19.19" textLength="89.84" lengthAdjust="spacingAndGlyphs" font-weight="bold" fill="#000" clip-path="url(#c28)">Column12</text>
<text x="31.60" y="406.50" font-size="18.75" textLength="104.47" lengthAdjust="spacingAndGlyphs" fill="#000" clip-path="url(#c28)">Case Docum</text>
<text x="124.00" y="378.40" font-size="19.19" textLength="89.84" lengthAdjust="spacingAndGlyphs" font-weight="bold" fill="#000" clip-path="url(#c120)">Column12</text>
<text x="123.60" y="406.50" font-size="18.75" textLength="104.47" lengthAdjust="spacingAndGlyphs" fill="#000" clip-path="url(#c120)">Case Docum</text>
<text x="216.00" y="378.40" font-size="19.19" textLength="89.84" lengthAdjust="spacingAndGlyphs" font-weight="bold" fill="#000" clip-path="url(#c212)">Column12</text>
<text x="215.60" y="406.50" font-size="18.75" textLength="104.47" lengthAdjust="spacingAndGlyphs" fill="#000" clip-path="url(#c212)">Case Docum</text>
<text x="308.00" y="378.40" font-size="19.19" textLength="89.84" lengthAdjust="spacingAndGlyphs" font-weight="bold" fill="#000" clip-path="url(#c304)">Column12</text>
<text x="307.60" y="406.50" font-size="18.75" textLength="104.47" lengthAdjust="spacingAndGlyphs" fill="#000" clip-path="url(#c304)">Case Docum</text>
<text x="400.00" y="378.40" font-size="19.19" textLength="89.84" lengthAdjust="spacingAndGlyphs" font-weight="bold" fill="#000" clip-path="url(#c396)">Column12</text>
<text x="399.60" y="406.50" font-size="18.75" textLength="104.47" lengthAdjust="spacingAndGlyphs" fill="#000" clip-path="url(#c396)">Case Docum</text>
<text x="31.40" y="463.30" font-size="18.02" textLength="111.34" lengthAdjust="spacingAndGlyphs" fill="#000" clip-path="url(#c28)">C:\Users\bob</text>
<text x="490.99" y="435.70" font-size="18.60" textLength="132.99" lengthAdjust="spacingAndGlyphs" fill="#000">Upload DocDef:</text>
<text x="628.22" y="435.70" font-size="18.60" textLength="155.37" lengthAdjust="spacingAndGlyphs" fill="#000">InternalServerError</text>
<text x="790.40" y="435.70" font-size="18.60" textLength="163.26" lengthAdjust="spacingAndGlyphs" fill="#000">- No enum constant</text>
<text x="959.20" y="435.70" font-size="18.60" textLength="431.65" lengthAdjust="spacingAndGlyphs" fill="#000">com.sustain.document.model.DocDef.Status.Active</text>
<text x="490.95" y="463.30" font-size="18.17" textLength="158.35" lengthAdjust="spacingAndGlyphs" fill="#000">Upload Document:</text>
<text x="653.75" y="463.30" font-size="18.17" textLength="83.70" lengthAdjust="spacingAndGlyphs" fill="#000">NotFound</text>
<text x="743.30" y="463.30" font-size="18.17" textLength="205.10" lengthAdjust="spacingAndGlyphs" fill="#000">- Could not find object of</text>
<text x="955.60" y="463.30" font-size="18.17" textLength="356.80" lengthAdjust="spacingAndGlyphs" fill="#000">type com.sustain.document.model.DocDef</text>
<text x="1315.43" y="463.30" font-size="18.17" textLength="115.88" lengthAdjust="spacingAndGlyphs" fill="#000">by identifier 0</text>
<text transform="translate(244.11,176.20) scale(0.2323,0.2928)" font-size="100" font-weight="bold" fill="#d6d6d6">B</text>
<text transform="translate(297.55,175.70) scale(0.3487,0.3030)" font-size="100" style="font-family:'Liberation Serif'" font-style="italic" fill="#d6d6d6">I</text>
<text transform="translate(1109.22,153.06) scale(0.2774,0.3927)" font-size="100" stroke="#292929" stroke-width="1" fill="#d6d6d6">$</text>
<g transform="rotate(-45 873.65 98.80)"><text transform="translate(861.53,106.10) scale(0.2171,0.2027)" font-size="100" fill="#d6d6d6">ab</text></g>
<text transform="translate(1123.18,189.61) scale(0.1735,0.1901)" font-size="100" fill="#d6d6d6">0</text>
<text transform="translate(1115.64,189.80) scale(0.2400,0.2273)" font-size="100" fill="#d6d6d6">.</text>
<text transform="translate(1106.17,205.81) scale(0.1922,0.1901)" font-size="100" fill="#d6d6d6">.00</text>
<text transform="translate(1158.29,189.61) scale(0.1899,0.1901)" font-size="100" fill="#d6d6d6">.00</text>
<text transform="translate(1175.40,205.81) scale(0.1653,0.1901)" font-size="100" fill="#d6d6d6">0</text>
<text transform="translate(1168.23,206.00) scale(0.2300,0.2273)" font-size="100" fill="#d6d6d6">.</text>
<text transform="translate(994.43,103.49) scale(0.1673,0.2073)" font-size="100" stroke="#383838" stroke-width="0.8" fill="#d6d6d6">a</text>
<text transform="translate(1006.58,103.49) scale(0.2196,0.2108)" font-size="100" stroke="#383838" stroke-width="0.8" fill="#d6d6d6">b</text>
<text transform="translate(994.28,117.59) scale(0.2045,0.2055)" font-size="100" stroke="#383838" stroke-width="0.8" fill="#d6d6d6">c</text>
<text transform="translate(1965.54,85.50) scale(0.1824,0.1929)" font-size="100" font-weight="bold" fill="#479ef5">A</text>
<text transform="translate(1965.24,104.00) scale(0.2200,0.2029)" font-size="100" fill="#d6d6d6">Z</text>
</g>
</svg>
</body></html>
